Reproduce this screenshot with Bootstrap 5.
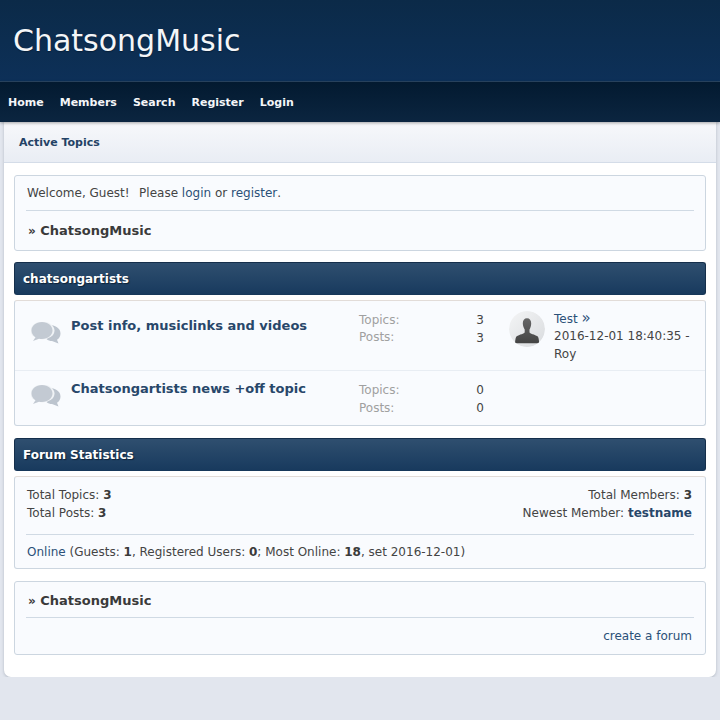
<!DOCTYPE html>
<html lang="en">
<head>
    <meta charset="UTF-8">
    <meta name="viewport" content="width=device-width, initial-scale=1.0">
    <title>ChatsongMusic</title>
    <link href="https://cdn.jsdelivr.net/npm/bootstrap@5.3.0/dist/css/bootstrap.min.css" rel="stylesheet">
    <style>
        body { background: #e2e6ee; font-family: "DejaVu Sans", sans-serif; font-size: 12px; line-height: 17.5px; color: #444; }
        a { color: #2b5078; text-decoration: none; }
        .site-top { height: 82px; background: linear-gradient(#0b2a48, #0d3058); border-bottom: 1px solid #2a4662; padding: 22px 13px 0; }
        .site-top h1 { font-size: 30px; line-height: 38px; font-weight: 400; color: #f4f6f8; margin: 0; text-shadow: 0 1px 1px #07203a; }
        .site-nav { height: 40px; padding: 1px 0 0 8px; background: linear-gradient(#031a30, #0b2540); box-shadow: 0 1px 3px rgba(0,0,0,.35); gap: 16px; position: relative; }
        .site-nav a { color: #f4f6f8; font-weight: 700; font-size: 11px; }
        .wrap-box { margin: 0 4px; height: 555px; background: #fff; border-radius: 0 0 7px 7px; box-shadow: 0 1px 3px rgba(90,100,120,.35); }
        .sub-head { height: 41px; padding: 1px 0 0 15px; background: linear-gradient(#f7f8fb, #e9edf4); border-bottom: 1px solid #d4dce8; font-size: 11px; font-weight: 700; color: #234265; }
        .wrap-inner { padding: 12px 10px 0; }
        .soft-box { background: #f9fbfe; border: 1px solid #ccd6e0; border-radius: 3px; }
        .soft-box.warm-top { margin-top: 5px; border-top-color: #e2dcd8; }
        .welcome-line { height: 34px; padding: 1px 0 0 12px; }
        .please-txt { margin-left: 9.500px; }
        .trail { font-size: 13px; font-weight: 700; color: #3a3a3a; padding: 1px 0 0 13px; }
        .trail.trail-low { padding-top: 3px; }
        .trail i { font-style: normal; font-size: 12px; }
        .thin-line { border-top: 1px solid #d0dae4; margin: 0 11px; }
        .cat-bar { height: 33px; padding: 3px 0 0 8px; background: linear-gradient(#2f4f6f, #183a5e); border: 1px solid #152f4b; border-bottom-color: #17385a; border-radius: 3px; color: #fff; font-weight: 700; font-size: 12px; text-shadow: 1px 1px 1px #0d2238; }
        .board-name { width: 288px; margin-left: 10px; font-size: 13px; font-weight: 700; line-height: 18px; }
        .board-name a { color: #28476a; }
        .board-row { border-bottom: 1px solid #e8edf3; }
        .bubble-icon { margin-left: 16px; }
        .stat-col { width: 125px; margin-top: 11px; }
        .muted-lbl { color: #a0a0a0; }
        .muted-lbl.lbl-up { margin-top: -.4px; }
        .av-circle { width: 36px; height: 36px; margin: 10px 0 0 25px; border-radius: 50%; }
        .last-post { width: 145px; margin: 9.500px 0 0 9px; }
        .last-post span { font-size: 15px; line-height: 10px; }
        .stat-top { height: 57px; padding: 10px 13px 0 12px; }
        .online-line { padding: 9px 12px 0; }
        .forum-link { padding: 10px 13px 0; }
        .strong-link { color: #28476a; }
        b, strong { color: #3a3a3a; }
    </style>
</head>
<body>
    <div class="site-top"><h1>ChatsongMusic</h1></div>
    <nav class="site-nav d-flex align-items-center">
        <a href="#">Home</a><a href="#">Members</a><a href="#">Search</a><a href="#">Register</a><a href="#">Login</a>
    </nav>
    <div class="wrap-box">
        <div class="sub-head d-flex align-items-center">Active Topics</div>
        <div class="wrap-inner">
            <div class="soft-box" style="height:76px">
                <div class="welcome-line d-flex align-items-center">Welcome, Guest!<span class="please-txt">Please&nbsp;</span><a href="#">login</a>&nbsp;or&nbsp;<a href="#">register</a>.</div>
                <div class="thin-line"></div>
                <div class="trail d-flex align-items-center" style="height:39px"><span><i>»</i> ChatsongMusic</span></div>
            </div>

            <div class="cat-bar d-flex align-items-center" style="margin-top:11px">chatsongartists</div>
            <div class="soft-box warm-top">
                <div class="board-row d-flex" style="height:70px">
                    <svg class="bubble-icon flex-shrink-0" style="margin-top:21px" width="30" height="22" viewBox="0 0 30 22"><use href="#bubbles"/></svg>
                    <div class="board-name flex-shrink-0" style="margin-top:16px"><a href="#">Post info, musiclinks and videos</a></div>
                    <div class="stat-col flex-shrink-0 d-flex justify-content-between">
                        <div class="muted-lbl lbl-up">Topics:<br>Posts:</div><div>3<br>3</div>
                    </div>
                    <svg class="av-circle flex-shrink-0" viewBox="0 0 36 36"><circle cx="18" cy="18" r="18" fill="url(#avBg)"/><path d="M18 7.300c2.700 0 4.200 2 4.200 5 0 2.600-.8 4.800-1.700 6.200v2.700c0 1.300 5.500 2.400 8 4 .9.700 1.500 3.200 1.700 7H6c.2-3.800.8-6.300 1.700-7 2.500-1.600 8-2.700 8-4v-2.700c-.9-1.400-1.900-3.600-1.900-6.200 0-3 1.500-5 4.200-5z" fill="url(#avFg)"/></svg>
                    <div class="last-post"><a href="#">Test <span>»</span></a><br>2016-12-01 18:40:35 - Roy</div>
                </div>
                <div class="d-flex" style="height:54px">
                    <svg class="bubble-icon flex-shrink-0" style="margin-top:14px" width="30" height="22" viewBox="0 0 30 22"><use href="#bubbles"/></svg>
                    <div class="board-name flex-shrink-0" style="margin-top:9px"><a href="#">Chatsongartists news +off topic</a></div>
                    <div class="stat-col flex-shrink-0 d-flex justify-content-between">
                        <div class="muted-lbl">Topics:<br>Posts:</div><div>0<br>0</div>
                    </div>
                </div>
            </div>

            <div class="cat-bar d-flex align-items-center" style="margin-top:12px">Forum Statistics</div>
            <div class="soft-box warm-top" style="height:93px">
                <div class="stat-top d-flex justify-content-between">
                    <div>Total Topics: <b>3</b><br>Total Posts: <b>3</b></div>
                    <div class="text-end">Total Members: <b>3</b><br>Newest Member: <a href="#" class="strong-link fw-bold">testname</a></div>
                </div>
                <div class="thin-line"></div>
                <div class="online-line"><a href="#">Online</a> (Guests: <b>1</b>, Registered Users: <b>0</b>; Most Online: <b>18</b>, set 2016-12-01)</div>
            </div>

            <div class="soft-box" style="margin-top:12px;height:74px">
                <div class="trail trail-low d-flex align-items-center" style="height:35px"><span><i>»</i> ChatsongMusic</span></div>
                <div class="thin-line"></div>
                <div class="forum-link text-end"><a href="#">create a forum</a></div>
            </div>
        </div>
    </div>

    <svg width="0" height="0" class="position-absolute">
        <defs>
            <linearGradient id="avBg" x1="0" y1="0" x2="1" y2="1"><stop offset="0" stop-color="#f4f5f6"/><stop offset="1" stop-color="#d9dbde"/></linearGradient>
            <linearGradient id="avFg" x1="0" y1="0" x2="0" y2="1"><stop offset="0" stop-color="#666"/><stop offset="1" stop-color="#444"/></linearGradient>
            <g id="bubbles">
                <path d="M18 3c6 0 11.500 3 11.500 8.500 0 3-1.500 5-3.500 6.300l1.500 3.700-6.500-2.500c-2 0-4-.6-5.500-2z" fill="#bcc4ce"/>
                <ellipse cx="11.500" cy="8.500" rx="12" ry="9" fill="#f0f3f6"/>
                <path d="M11 0c6 0 10.500 3.700 10.500 8.500S17 17 11 17c-1 0-2-.1-3-.3L2 19l2.500-3.800C2 13.700.5 11.300.5 8.500.5 3.700 5 0 11 0z" fill="#c3cad3"/>
            </g>
        </defs>
    </svg>
    <script src="https://cdn.jsdelivr.net/npm/bootstrap@5.3.0/dist/js/bootstrap.bundle.min.js"></script>
</body>
</html>
